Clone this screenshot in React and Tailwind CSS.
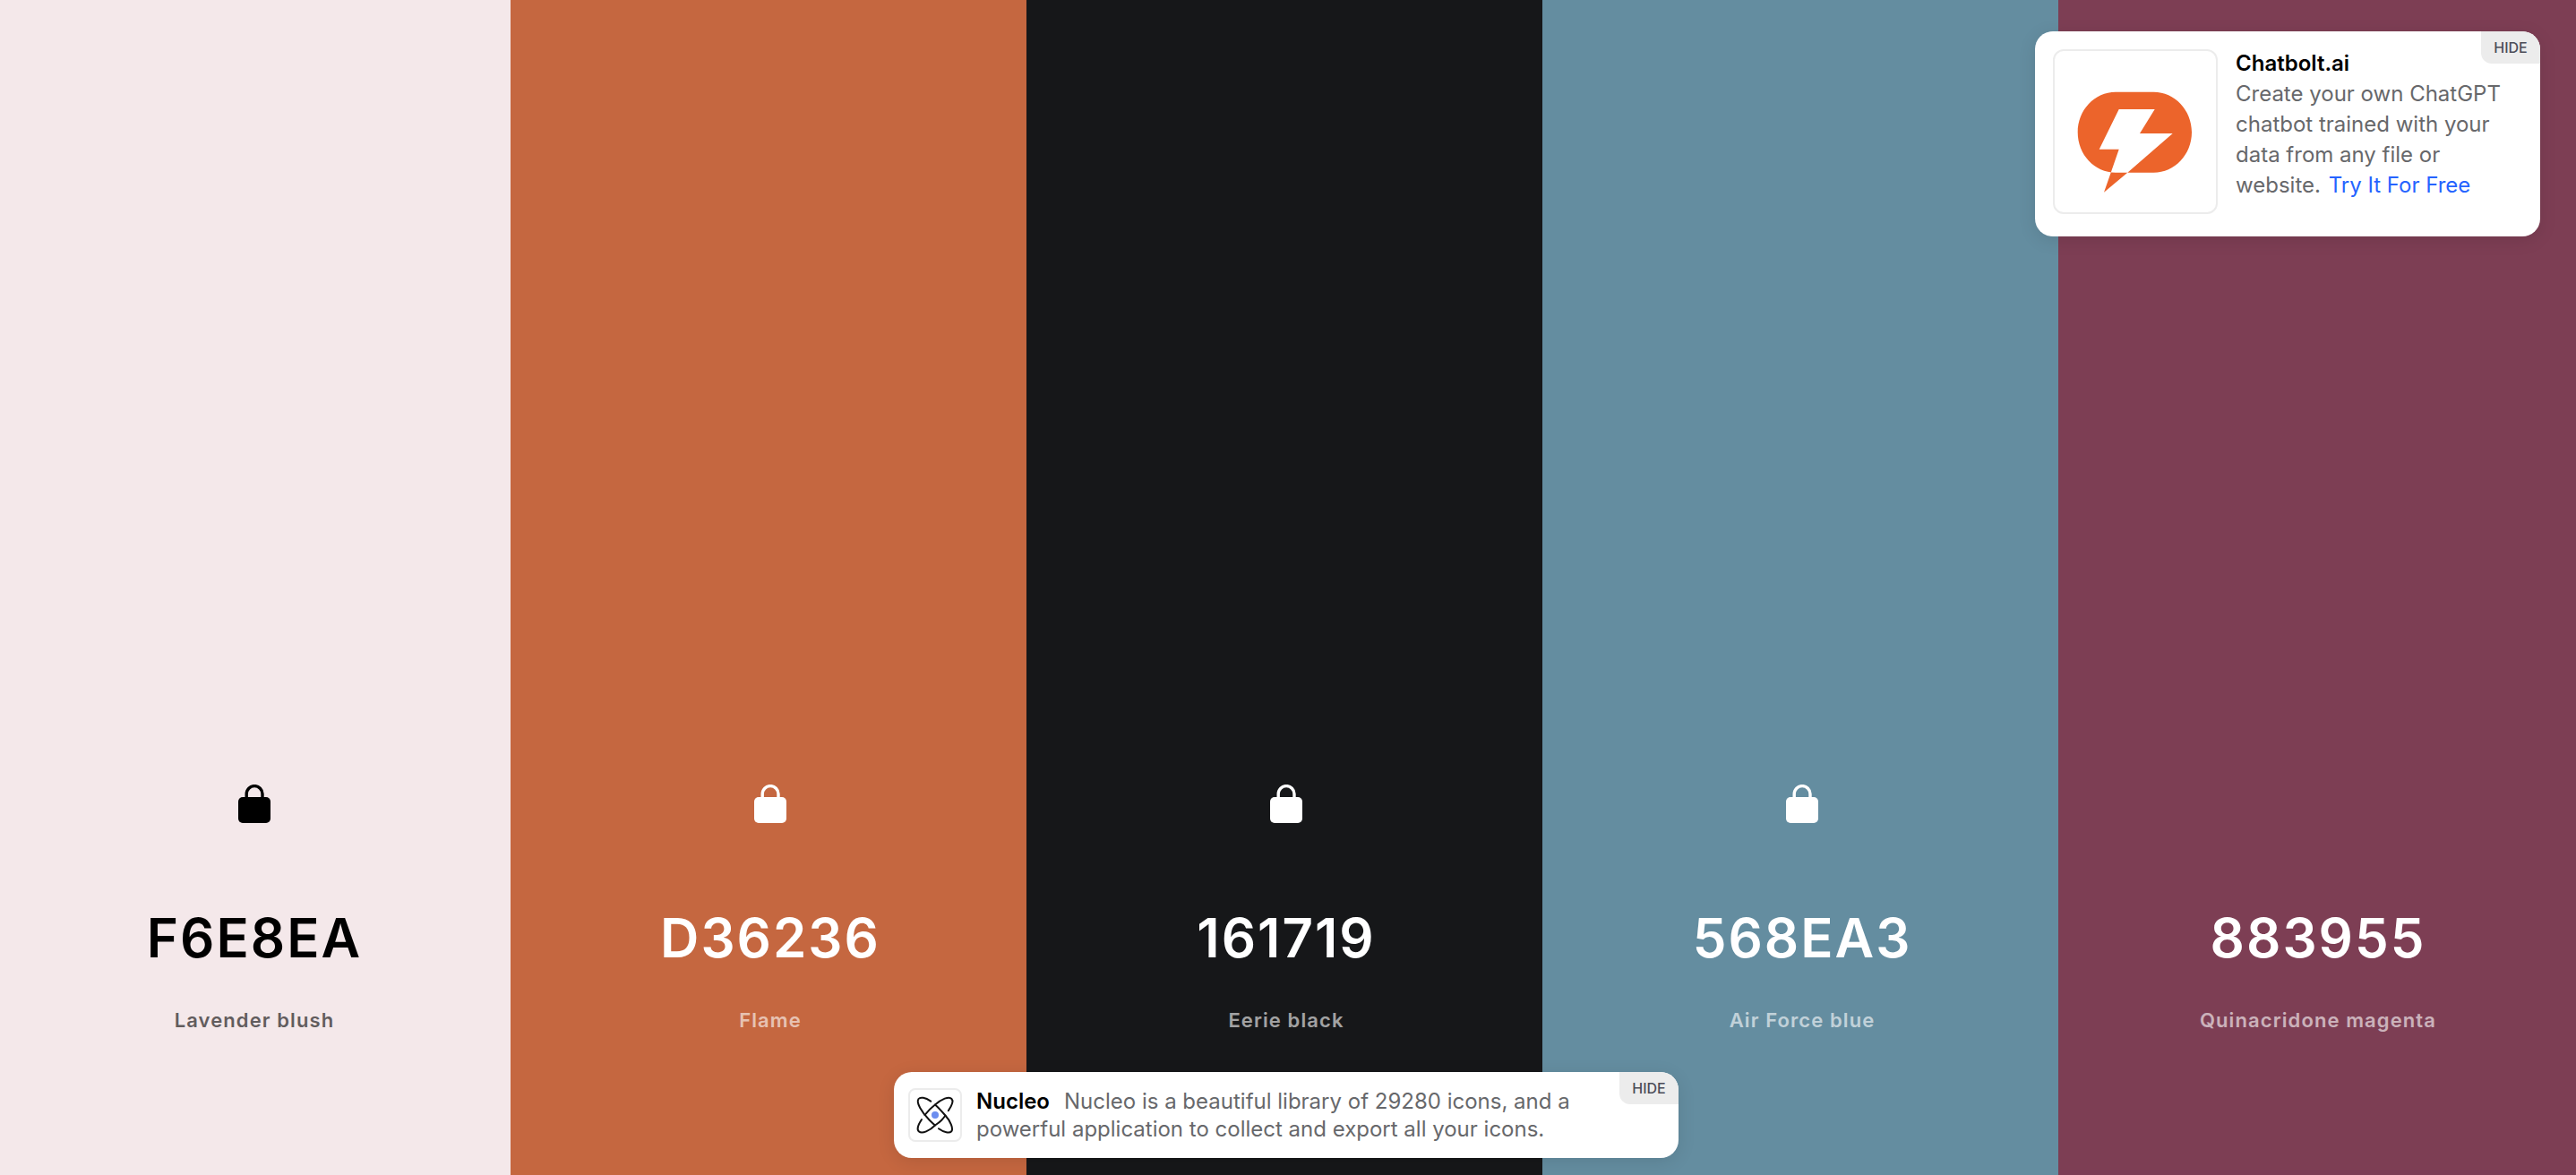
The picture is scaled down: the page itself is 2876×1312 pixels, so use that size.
const COLORS = [
  { hex: "F6E8EA", name: "Lavender blush", tone: "bg-[#f4e8ea] text-black pr-0.5", locked: true },
  { hex: "D36236", name: "Flame", tone: "bg-[#c56740] text-white pl-1", locked: true },
  { hex: "161719", name: "Eerie black", tone: "bg-[#161719] text-white pl-1", locked: true },
  { hex: "568EA3", name: "Air Force blue", tone: "bg-[#648da0] text-white pl-1", locked: true },
  { hex: "883955", name: "Quinacridone magenta", tone: "bg-[#7d3e54] text-white pl-0.5", locked: false },
];

function LockIcon() {
  return (
    <svg className="h-11 w-9" viewBox="0 0 36 44" fill="none" aria-hidden="true">
      <rect x="0" y="14" width="36" height="29" rx="5" fill="currentColor" />
      <path d="M9.2 16V10.5a8.9 8.9 0 0 1 17.8 0V16" stroke="currentColor" strokeWidth="3.4" />
    </svg>
  );
}

function ChatboltLogo() {
  return (
    <svg className="size-full" viewBox="2 2 180 180" aria-hidden="true">
      <path
        fill="#ec642b"
        fillRule="evenodd"
        d="M70 47.7H112.5C136 47.7 155 68 155 92.7S136 137.7 112.5 137.7H70C46.5 137.7 27.7 117.5 27.7 92.7S46.5 47.7 70 47.7ZM73.7 67H113.7L97 94H133.7L83.3 137.7L57 159.7L64.7 137.7L73.7 111.7H51.7Z"
      />
    </svg>
  );
}

function NucleoLogo() {
  return (
    <svg className="size-full" viewBox="2 2 56 56" fill="none" aria-hidden="true">
      <g stroke="#111111" strokeWidth="2" strokeLinecap="round">
        <path d="M25.2 14.6C19 10.5 13.5 9.5 11.5 12C8.5 16 15 27 23.5 35.5C26 38 28 40 30 41.5" />
        <path d="M34 45.2C40 49.5 46 50.5 48 48.5C51 45.5 47 36.5 41 30C37.5 26 34 22 30 18.5" />
        <path d="M15 35C11 41 9.5 46.5 12 48.5C15.5 51.5 24 47.5 30 41.5C33 39.5 35.500 37.5 37 36C39 34 40 32.500 41.500 30.500" />
        <path d="M44.8 25.2C49 19 50.5 14 48.5 12C45.5 8.5 37 12.5 30 18.5C26 21.5 22 25.5 18.5 30" />
      </g>
      <circle cx="30" cy="30" r="4" fill="#6b8def" />
    </svg>
  );
}

function HideButton() {
  return (
    <button
      type="button"
      className="absolute top-0 right-0 h-9 w-[66px] rounded-bl-xl rounded-tr-[20px] bg-[#ececec] text-base font-medium text-[#4b4c58]"
    >
      HIDE
    </button>
  );
}

function Swatch({ hex, name, tone, locked }) {
  return (
    <section className={`flex min-h-screen flex-col items-center justify-end pb-[157px] ${tone}`}>
      {locked && (
        <button type="button" aria-label={`Unlock ${name}`} className="mb-[85px]">
          <LockIcon />
        </button>
      )}
      <button type="button" className="text-[60px] leading-[84px] font-semibold tracking-[2px] [font-kerning:none]">
        {hex}
      </button>
      <button type="button" className="mt-[34px] text-[22px] leading-8 font-semibold tracking-wider opacity-60">
        {name}
      </button>
    </section>
  );
}

export default function App() {
  return (
    <div className="relative font-['Inter',sans-serif] [font-optical-sizing:none]">
      <main className="grid grid-cols-[570fr_576fr_576fr_576fr_578fr]">
        {COLORS.map((color) => (
          <Swatch key={color.hex} {...color} />
        ))}
      </main>

      <aside className="absolute top-[35px] right-10 flex w-[564px] gap-5 rounded-[20px] bg-white px-5 pt-5 pb-[25px] text-2xl text-[#67686b] shadow-[0_4px_20px_rgba(0,0,0,0.1)]">
        <div className="size-[184px] shrink-0 rounded-xl border-2 border-[#ececec]">
          <ChatboltLogo />
        </div>
        <div className="min-w-0 flex-1 pr-4">
          <h2 className="mb-px leading-8 font-semibold text-black">Chatbolt.ai</h2>
          <p className="leading-[34px]">
            Create your own ChatGPT chatbot trained with your data from any file or website.{" "}
            <a href="#chatbolt" className="ml-0.5 text-[#2563ff]">
              Try It For Free
            </a>
          </p>
        </div>
        <HideButton />
      </aside>

      <aside className="absolute right-1 bottom-[19px] left-0 mx-auto flex w-[876px] items-center gap-4 rounded-[20px] bg-white px-4 py-[17px] text-2xl leading-[31px] text-[#67686b] shadow-[0_4px_20px_rgba(0,0,0,0.1)]">
        <div className="size-[60px] shrink-0 rounded-lg border-2 border-[#ececec]">
          <NucleoLogo />
        </div>
        <p className="min-w-0 flex-1 pr-20">
          <strong className="mr-4 font-semibold text-black">Nucleo</strong>
          Nucleo is a beautiful library of 29280 icons, and a powerful application to collect and export all your icons.
        </p>
        <HideButton />
      </aside>
    </div>
  );
}
